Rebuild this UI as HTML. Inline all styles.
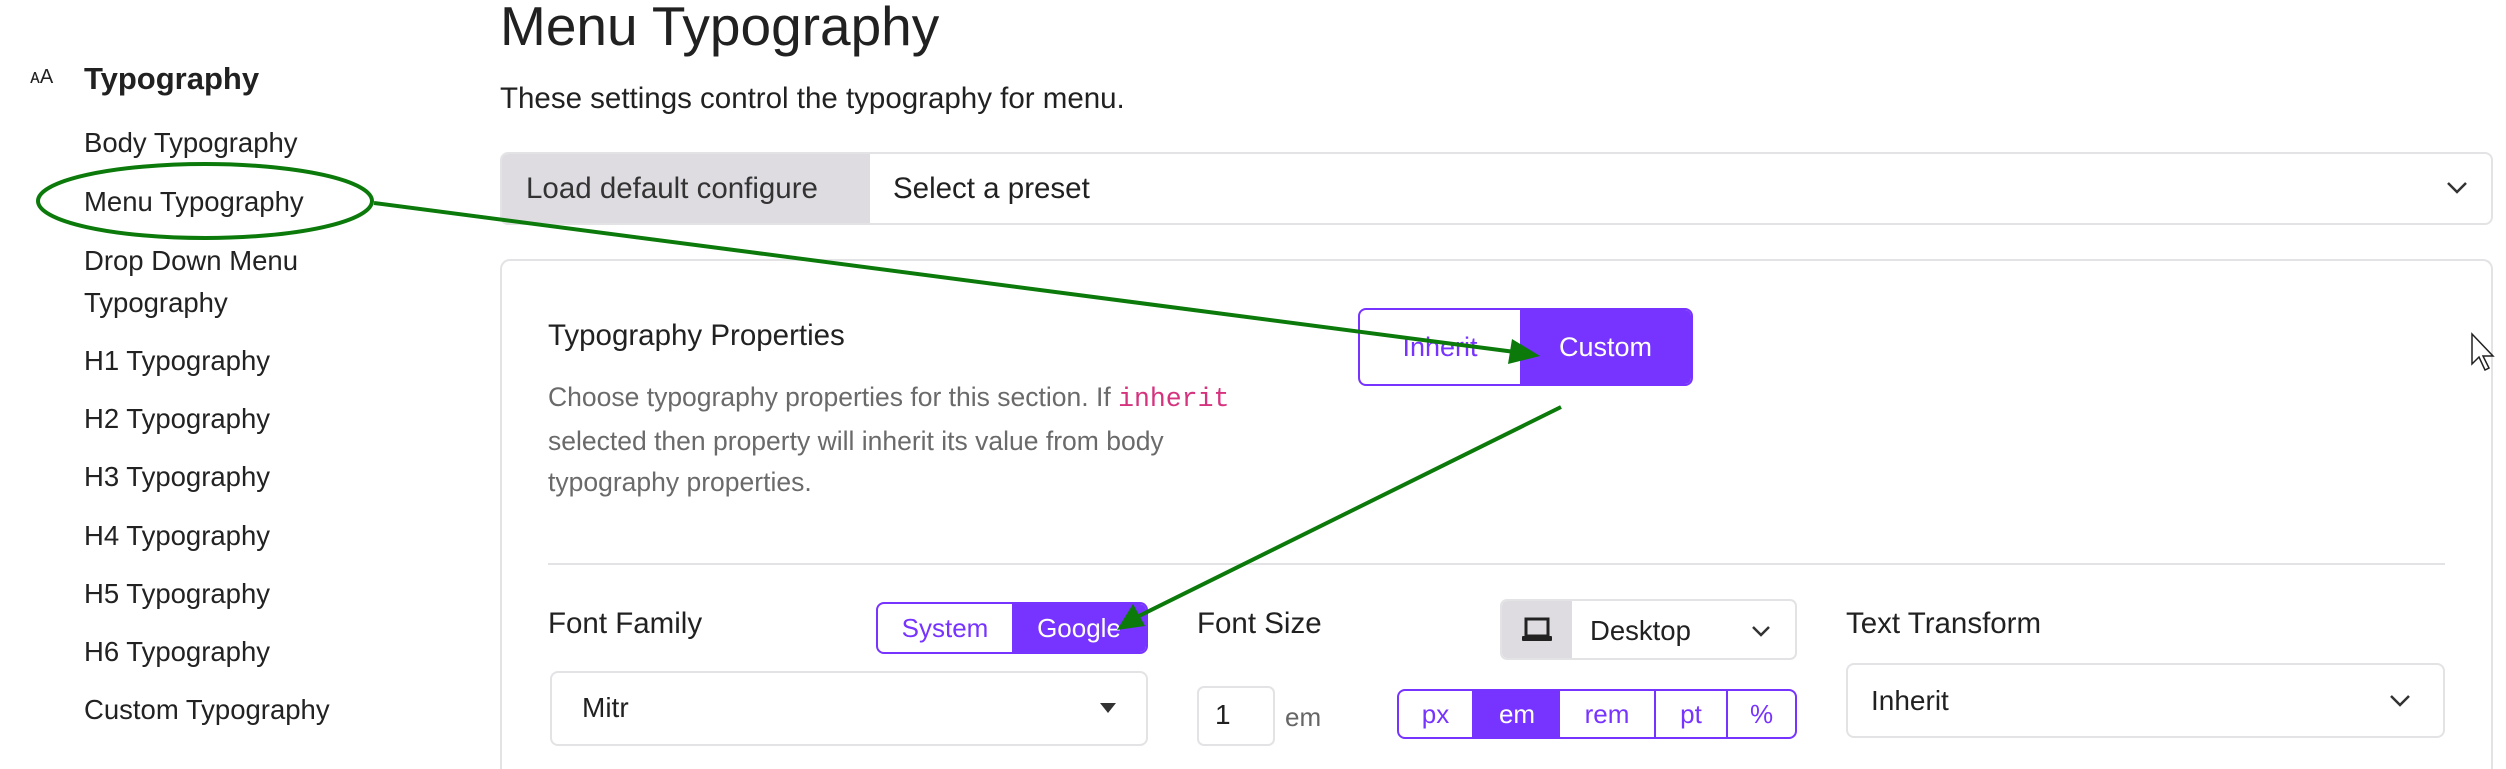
<!DOCTYPE html>
<html style="height:769px;overflow:hidden"><head><meta charset="utf-8"><style>
*{box-sizing:border-box;margin:0;padding:0}
body{width:2506px;height:769px;overflow:hidden;background:#fff;font-family:"Liberation Sans",sans-serif;color:#212121;position:relative}
.a{position:absolute;white-space:nowrap}
.side{font-size:27.5px;color:#222}
.p{background:#7733ff;color:#fff}
.b{border:2px solid #7733ff;border-radius:8px;position:absolute;overflow:hidden;display:flex}
.b div{display:flex;align-items:center;justify-content:center;color:#7733ff;height:100%}
.b div.p{color:#fff}
</style></head><body>
<div class="a" style="left:30px;top:66px;font-size:20px;color:#222">ᴀA</div>
<div class="a" style="left:84px;top:61px;font-size:31px;font-weight:bold">Typography</div>
<div class="a side" style="left:84px;top:127px">Body Typography</div>
<div class="a side" style="left:84px;top:186px">Menu Typography</div>
<div class="a side" style="left:84px;top:245px">Drop Down Menu</div>
<div class="a side" style="left:84px;top:287px">Typography</div>
<div class="a side" style="left:84px;top:345px">H1 Typography</div>
<div class="a side" style="left:84px;top:403px">H2 Typography</div>
<div class="a side" style="left:84px;top:461px">H3 Typography</div>
<div class="a side" style="left:84px;top:520px">H4 Typography</div>
<div class="a side" style="left:84px;top:578px">H5 Typography</div>
<div class="a side" style="left:84px;top:636px">H6 Typography</div>
<div class="a side" style="left:84px;top:694px">Custom Typography</div>

<div class="a" style="left:500px;top:-6px;font-size:55px">Menu Typography</div>
<div class="a" style="left:500px;top:82px;font-size:29.5px">These settings control the typography for menu.</div>

<div class="a" style="left:500px;top:152px;width:1993px;height:73px;border:2px solid #e3e3e6;border-radius:8px;overflow:hidden">
 <div class="a" style="left:0;top:0;width:368px;height:100%;background:#dedce1"></div>
 <div class="a" style="left:24px;top:18px;font-size:29.5px;color:#333">Load default configure</div>
 <div class="a" style="left:391px;top:18px;font-size:29.5px">Select a preset</div>
 <svg class="a" style="left:1944px;top:27px" width="22" height="14"><path d="M2 2L11 11L20 2" stroke="#333" stroke-width="2.5" fill="none"/></svg>
</div>

<div class="a" style="left:500px;top:259px;width:1993px;height:510px;border:2px solid #e3e3e6;border-bottom:none;border-radius:10px 10px 0 0"></div>
<div class="a" style="left:548px;top:319px;font-size:29.5px">Typography Properties</div>
<div class="a" style="left:548px;top:377px;font-size:26.5px;color:#6a6a6a;line-height:41.5px">Choose typography properties for this section. If <span style="font-family:'Liberation Mono',monospace;color:#d6337f">inherit</span><br>selected then property will inherit its value from body<br>typography properties.</div>

<div class="b" style="left:1358px;top:308px;width:335px;height:78px"><div style="width:160px;font-size:27px">Inherit</div><div class="p" style="flex:1;font-size:27px">Custom</div></div>

<div class="a" style="left:548px;top:563px;width:1897px;height:2px;background:#e3e3e6"></div>

<div class="a" style="left:548px;top:607px;font-size:29.5px">Font Family</div>
<div class="b" style="left:876px;top:602px;width:272px;height:52px"><div style="width:134px;font-size:26px">System</div><div class="p" style="flex:1;font-size:26px">Google</div></div>
<div class="a" style="left:550px;top:671px;width:598px;height:75px;border:2px solid #e3e3e6;border-radius:8px"></div>
<div class="a" style="left:582px;top:692px;font-size:28px">Mitr</div>
<svg class="a" style="left:1100px;top:703px" width="16" height="11"><path d="M0 0H16L8 10Z" fill="#333"/></svg>

<div class="a" style="left:1197px;top:607px;font-size:29.5px">Font Size</div>
<div class="a" style="left:1500px;top:599px;width:297px;height:61px;border:2px solid #e3e3e6;border-radius:7px;overflow:hidden">
 <div class="a" style="left:0;top:0;width:70px;height:100%;background:#dedce1"></div>
 <svg class="a" style="left:20px;top:16px" width="30" height="26"><rect x="4" y="2" width="22" height="17" fill="none" stroke="#222" stroke-width="3"/><rect x="0" y="19" width="30" height="5" rx="1" fill="#222"/></svg>
 <div class="a" style="left:88px;top:14px;font-size:27.5px">Desktop</div>
 <svg class="a" style="left:249px;top:24px" width="20" height="13"><path d="M2 2L10 10L18 2" stroke="#333" stroke-width="2.5" fill="none"/></svg>
</div>
<div class="a" style="left:1197px;top:686px;width:78px;height:60px;border:2px solid #e3e3e6;border-radius:7px"></div>
<div class="a" style="left:1215px;top:699px;font-size:28px">1</div>
<div class="a" style="left:1285px;top:702px;font-size:26px;color:#666">em</div>
<div class="b" style="left:1397px;top:689px;width:400px;height:50px">
 <div style="width:75px;font-size:26px;border-right:2px solid #7733ff">px</div><div class="p" style="width:86px;font-size:26px">em</div><div style="width:96px;font-size:26px;border-right:2px solid #7733ff">rem</div><div style="width:72px;font-size:26px;border-right:2px solid #7733ff">pt</div><div style="flex:1;font-size:26px">%</div>
</div>

<div class="a" style="left:1846px;top:607px;font-size:29.5px">Text Transform</div>
<div class="a" style="left:1846px;top:663px;width:599px;height:75px;border:2px solid #e3e3e6;border-radius:8px"></div>
<div class="a" style="left:1871px;top:685px;font-size:28px">Inherit</div>
<svg class="a" style="left:2389px;top:694px" width="22" height="14"><path d="M2 2L11 11L20 2" stroke="#333" stroke-width="2.5" fill="none"/></svg>

<svg class="a" style="left:2470px;top:332px" width="26" height="42"><path d="M2 2V32L9 25L15 38L19 36L13 24H23Z" fill="#fff" stroke="#222" stroke-width="1.5"/></svg>

<svg class="a" style="left:0;top:0" width="2506" height="769">
 <ellipse cx="205" cy="201" rx="167" ry="37" fill="none" stroke="#0b7a0b" stroke-width="4"/>
 <line x1="374" y1="203" x2="1515" y2="352" stroke="#0b7a0b" stroke-width="4"/>
 <path d="M1540 356L1508 364L1512 339Z" fill="#0b7a0b"/>
 <line x1="1561" y1="407" x2="1135" y2="618" stroke="#0b7a0b" stroke-width="4"/>
 <path d="M1117 630L1133 604L1145 626Z" fill="#0b7a0b"/>
</svg>
</body></html>
